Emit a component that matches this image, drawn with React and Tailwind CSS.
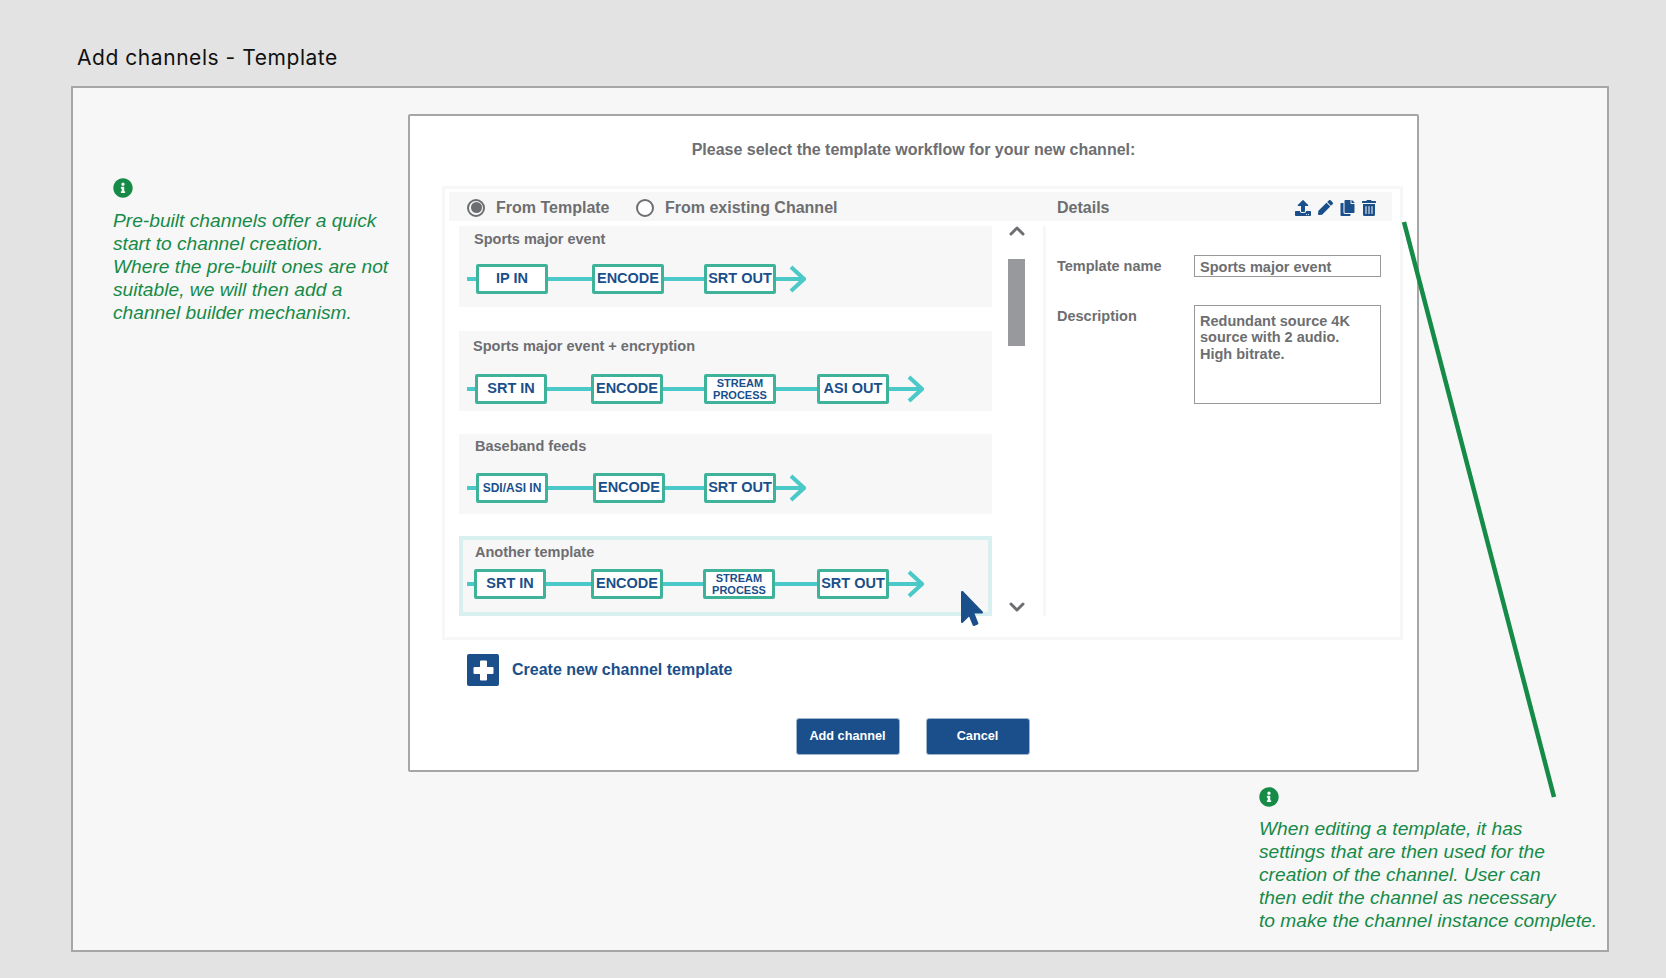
import { ChevronUp, ChevronDown } from 'lucide-react'
import { FaInfoCircle, FaUpload, FaPen, FaCopy, FaTrashAlt, FaMousePointer } from 'react-icons/fa'

const ARIAL = 'font-["Liberation_Sans",Arial,sans-serif]'

const TEMPLATES = [
  {
    title: 'Sports major event',
    card: 'mt-[5px] h-[81px] pt-[4px] bg-[#f7f7f7]',
    titleCls: 'pl-[15px]',
    pipe: 'pl-[8px] mt-[16px]',
    lead: 'w-[9px]',
    gaps: ['', 'w-[44px]', 'w-[40px]'],
    tail: 29,
    steps: [{ label: 'IP IN' }, { label: 'ENCODE' }, { label: 'SRT OUT' }],
  },
  {
    title: 'Sports major event + encryption',
    card: 'mt-[24px] h-[80px] pt-[6px] bg-[#f7f7f7]',
    titleCls: 'pl-[14px]',
    pipe: 'pl-[8px] mt-[19px]',
    lead: 'w-[8px]',
    gaps: ['', 'w-[44px]', 'w-[41px]', 'w-[41px]'],
    tail: 34,
    steps: [{ label: 'SRT IN' }, { label: 'ENCODE' }, { label: 'STREAM PROCESS', small: true }, { label: 'ASI OUT' }],
  },
  {
    title: 'Baseband feeds',
    card: 'mt-[23px] h-[80px] pt-[3px] bg-[#f7f7f7]',
    titleCls: 'pl-[16px]',
    pipe: 'pl-[8px] mt-[18px]',
    lead: 'w-[9px]',
    gaps: ['', 'w-[45px]', 'w-[39px]'],
    tail: 29,
    steps: [{ label: 'SDI/ASI IN', tiny: true }, { label: 'ENCODE' }, { label: 'SRT OUT' }],
  },
  {
    title: 'Another template',
    card: 'mt-[22px] h-[80px] pt-[3px] bg-[#f7f7f7] border-4 border-[#d8f0f0]',
    titleCls: 'pl-[12px]',
    pipe: 'pl-[4px] mt-[8px]',
    lead: 'w-[7px]',
    gaps: ['', 'w-[45px]', 'w-[40px]', 'w-[42px]'],
    tail: 34,
    steps: [{ label: 'SRT IN' }, { label: 'ENCODE' }, { label: 'STREAM PROCESS', small: true }, { label: 'SRT OUT' }],
  },
]

function Step({ label, small, tiny }) {
  return (
    <div className="flex h-[30px] w-[72px] shrink-0 items-center justify-center border-[3px] border-[#3fb39a] bg-white rounded-[2px] text-center font-bold text-[#1a4f8b]">
      {small ? (
        <span className="text-[11px] leading-[12px] w-[60px]">{label}</span>
      ) : (
        <span className={tiny ? 'text-[12px] whitespace-nowrap' : 'text-[14.5px] whitespace-nowrap'}>{label}</span>
      )}
    </div>
  )
}

function Pipeline({ template }) {
  const { steps, pipe, lead, gaps, tail } = template
  return (
    <div className={`flex h-[30px] items-center ${pipe}`}>
      <div className={`h-[4px] bg-[#4bc8c8] ${lead}`} />
      {steps.map((s, i) => (
        <div key={i} className="flex items-center">
          {i > 0 && <div className={`h-[4px] bg-[#4bc8c8] ${gaps[i]}`} />}
          <Step {...s} />
        </div>
      ))}
      <svg width={tail + 1} height="30" className="shrink-0">
        <path d={`M0 15H${tail - 2}`} stroke="#4bc8c8" strokeWidth="4" />
        <path d={`M${tail - 14} 3L${tail - 1} 15L${tail - 14} 27`} fill="none" stroke="#4bc8c8" strokeWidth="4" />
      </svg>
    </div>
  )
}

function Note({ className, gap, lines }) {
  return (
    <aside className={className}>
      <FaInfoCircle className="h-[20px] w-[20px] text-[#168a47]" />
      <div className={`text-[19.2px] italic leading-[23px] text-[#168a47] whitespace-nowrap ${gap}`}>
        {lines.map(l => <div key={l}>{l}</div>)}
      </div>
    </aside>
  )
}

export default function App() {
  return (
    <div className={`h-[978px] w-[1666px] overflow-hidden bg-[#e3e3e3] pl-[71px] pt-[45px] ${ARIAL}`}>
      <h1 className="ml-[6px] h-[26px] font-['Inter',sans-serif] text-[21px] leading-[26px] tracking-[0.55px] font-normal text-[#111]">
        Add channels - Template
      </h1>

      <div className="relative mt-[15px] h-[866px] w-[1538px] border-2 border-[#a6a6a6] bg-[#f7f7f7]">
        <div className="flex items-start pt-[26px]">
          <Note
            className="ml-[40px] mt-[64px] w-[295px] shrink-0"
            gap="mt-[11px]"
            lines={[
              'Pre-built channels offer a quick',
              'start to channel creation.',
              'Where the pre-built ones are not',
              'suitable, we will then add a',
              'channel builder mechanism.',
            ]}
          />

          {/* Dialog */}
          <section className="relative h-[658px] w-[1011px] shrink-0 rounded-[2px] border-2 border-[#a6a6a6] bg-white">
            <h2 className="mt-[24px] text-center text-[16px] leading-[20px] font-bold text-[#6d6e71]">
              Please select the template workflow for your new channel:
            </h2>

            <div className="ml-[32px] mt-[26px] h-[454px] w-[961px] border-[3px] border-[#f7f7f7] pt-[3px] pl-[4px]">
              {/* Tabs header */}
              <div className="flex h-[29px] w-[943px] items-center bg-[#f7f7f7] pt-[2px] text-[16px] font-bold text-[#6d6e71]">
                <span className="ml-[18px] flex h-[18px] w-[18px] items-center justify-center rounded-full border-2 border-[#6d6e71]">
                  <span className="h-[11px] w-[11px] rounded-full bg-[#6d6e71]" />
                </span>
                <span className="ml-[11px] w-[140px]">From Template</span>
                <span className="h-[18px] w-[18px] rounded-full border-2 border-[#6d6e71] bg-white" />
                <span className="ml-[11px] w-[392px]">From existing Channel</span>
                <span className="w-[238px]">Details</span>
                <span className="flex items-center gap-[7px] text-[#1a4f8b]">
                  <FaUpload className="h-[16px] w-[16px]" />
                  <FaPen className="h-[15px] w-[15px]" />
                  <FaCopy className="h-[16px] w-[15px]" />
                  <FaTrashAlt className="h-[16px] w-[14px]" />
                </span>
              </div>

              <div className="flex h-[395px]">
                {/* Template list */}
                <div className="ml-[10px] w-[533px] shrink-0">
                  {TEMPLATES.map(t => (
                    <div key={t.title} className={t.card}>
                      <div className={`h-[18px] text-[14.5px] leading-[18px] font-bold text-[#6d6e71] ${t.titleCls}`}>{t.title}</div>
                      <Pipeline template={t} />
                    </div>
                  ))}
                </div>

                {/* Scrollbar */}
                <div className="ml-[16px] flex h-[395px] w-[17px] shrink-0 flex-col items-center">
                  <ChevronUp className="-mt-[2px] h-[24px] w-[24px] shrink-0 text-[#6d6e71]" strokeWidth={3} />
                  <div className="mt-[16px] h-[87px] w-[17px] shrink-0 bg-[#98999c]" />
                  <ChevronDown className="mt-[249px] h-[24px] w-[24px] shrink-0 text-[#6d6e71]" strokeWidth={3} />
                </div>

                {/* Details */}
                <div className="ml-[18px] mt-[5px] h-[390px] w-[3px] shrink-0 bg-[#f7f7f7]" />
                <div className="pl-[11px] text-[14.5px] font-bold text-[#6d6e71]">
                  <div className="mt-[33px] flex items-center">
                    <label className="w-[137px] pt-[2px]">Template name</label>
                    <div className="flex h-[22px] w-[187px] items-center border border-[#999] px-[5px] pt-[3px]">Sports major event</div>
                  </div>
                  <div className="mt-[27px] flex items-start">
                    <label className="w-[137px] pt-[1px]">Description</label>
                    <div className="h-[99px] w-[187px] border border-[#999] px-[5px] pt-[7px] leading-[16.5px]">
                      Redundant source 4K<br />source with 2 audio.<br />High bitrate.
                    </div>
                  </div>
                </div>
              </div>
            </div>

            <div className="ml-[57px] mt-[14px] flex items-center">
              <span className="flex h-[32px] w-[32px] items-center justify-center rounded-[2px] bg-[#1a4f8b]">
                <svg width="21" height="21" viewBox="0 0 21 21">
                  <path d="M7 1.5a1 1 0 0 1 1-1h5a1 1 0 0 1 1 1V7h5.500a1 1 0 0 1 1 1v5a1 1 0 0 1-1 1H14v5.500a1 1 0 0 1-1 1H8a1 1 0 0 1-1-1V14H1.500a1 1 0 0 1-1-1V8a1 1 0 0 1 1-1H7z" fill="#fff" />
                </svg>
              </span>
              <span className="ml-[13px] text-[16px] font-bold text-[#1a4f8b]">Create new channel template</span>
            </div>

            <div className="mt-[32px] flex justify-center gap-[26px] pr-[2px]">
              <button className="h-[37px] w-[104px] rounded-[3px] border border-[#9fb4cc] bg-[#1a4f8b] pt-[1px] text-[12.7px] font-bold text-white">Add channel</button>
              <button className="h-[37px] w-[104px] rounded-[3px] border border-[#9fb4cc] bg-[#1a4f8b] pt-[1px] text-[12.7px] font-bold text-white">Cancel</button>
            </div>

            {/* Mouse pointer over the last card */}
            <FaMousePointer className="absolute left-[551px] top-[474px] h-[37px] w-[22px] text-[#1a4f8b]" />
          </section>
        </div>

        <Note
          className="ml-[1186px] mt-[15px]"
          gap="mt-[10px]"
          lines={[
            'When editing a template, it has',
            'settings that are then used for the',
            'creation of the channel. User can',
            'then edit the channel as necessary',
            'to make the channel instance complete.',
          ]}
        />

        {/* Callout line from the details panel to the note */}
        <svg className="absolute left-0 top-0" width="1534" height="862">
          <line x1="1331" y1="134" x2="1481" y2="709" stroke="#168a47" strokeWidth="4.5" />
        </svg>
      </div>
    </div>
  )
}
